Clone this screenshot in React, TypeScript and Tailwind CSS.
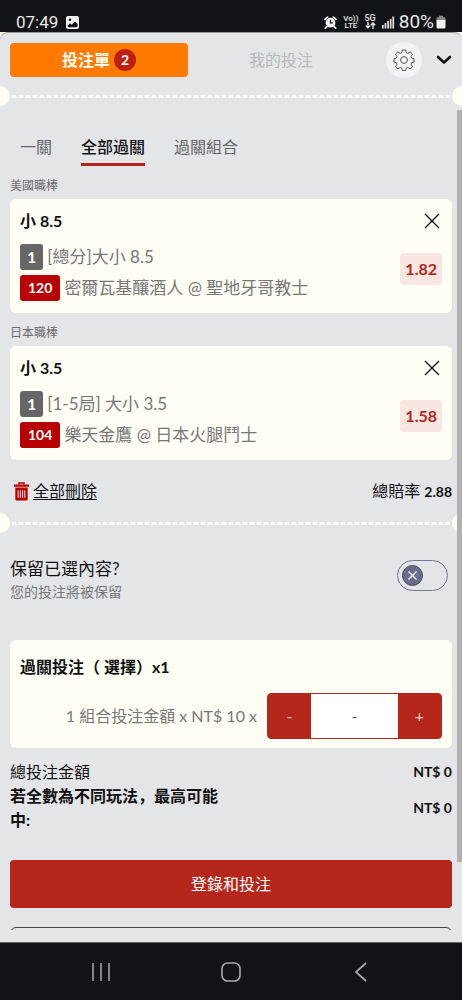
import { useState } from 'react';

interface Bet {
  id: string;
  league: string;
  pick: string;
  line: string;
  period: string;
  market: string;
  code: string;
  match: string;
  odds: string;
}

const BETS: Bet[] = [
  {
    id: 'mlb',
    league: '美國職棒',
    pick: '小',
    line: '8.5',
    period: '1',
    market: '[總分]大小 8.5',
    code: '120',
    match: '密爾瓦基釀酒人 @ 聖地牙哥教士',
    odds: '1.82',
  },
  {
    id: 'npb',
    league: '日本職棒',
    pick: '小',
    line: '3.5',
    period: '1',
    market: '[1-5局] 大小 3.5',
    code: '104',
    match: '樂天金鷹 @ 日本火腿鬥士',
    odds: '1.58',
  },
];

const TABS = ['一關', '全部過關', '過關組合'];

// =========================
// STATUS BAR
// =========================
function StatusBar() {
  return (
    <div className="flex h-8 shrink-0 items-end justify-between bg-[#121316] pl-4 pr-4 font-['Roboto',sans-serif] text-[#e8e8e8]">
      <div className="flex items-center gap-2">
        <span className="text-[17px] leading-5">07:49</span>
        <svg width="13" height="13" viewBox="0 0 13 13" aria-hidden="true">
          <rect width="13" height="13" rx="2" fill="#f1f1f1" />
          <circle cx="4" cy="3.8" r="1.3" fill="#121316" />
          <path d="M1.500 9.800 4 7.200l1.700 1.500L9 5.400l2.600 2.600v1.800a1.400 1.400 0 0 1-1.400 1.400H2.900a1.400 1.400 0 0 1-1.400-1.400z" fill="#121316" />
        </svg>
      </div>

      <div className="flex items-center">
        <svg width="13" height="13" viewBox="0 0 13 13" aria-hidden="true">
          <circle cx="6.5" cy="6.7" r="4.9" fill="#f1f1f1" />
          <path d="M1 3.400 3.600 1.100M12 3.400 9.400 1.100M2.800 10.600 1.400 12.200M10.200 10.600l1.400 1.600" stroke="#f1f1f1" strokeWidth="1.800" strokeLinecap="round" />
          <path d="M6.500 3.700v3.200h2.400" fill="none" stroke="#121316" strokeWidth="1.200" />
        </svg>
        <span className="ml-1.5 flex flex-col items-center text-[8px] font-medium leading-[7px]">
          <span>Vo))</span>
          <span>LTE</span>
        </span>
        <span className="ml-1.5 flex flex-col items-center text-[9px] font-medium leading-[7px]">
          <span>5G</span>
          <svg width="11" height="7" viewBox="0 0 11 7" fill="none" stroke="#f1f1f1" strokeWidth="1.300" aria-hidden="true">
            <path d="M3 0v5.600M.8 3.600 3 5.900l2.200-2.300M8 7V1.200M5.800 3.300 8 1l2.200 2.300" />
          </svg>
        </span>
        <svg className="ml-1.5" width="13" height="13" viewBox="0 0 13 13" fill="#e0e0e0" aria-hidden="true">
          <rect x="0" y="9" width="1.7" height="3.5" />
          <rect x="2.6" y="7" width="1.7" height="5.5" />
          <rect x="5.2" y="5" width="1.7" height="7.5" />
          <rect x="7.8" y="2.8" width="1.7" height="9.7" />
          <rect x="10.4" y=".5" width="1.7" height="12" />
        </svg>
        <span className="ml-1 text-[19px] leading-5">80%</span>
        <svg className="ml-0.5" width="10" height="14" viewBox="0 0 10 14" aria-hidden="true">
          <path d="M3 .8h4v1.400h1.200A1.300 1.300 0 0 1 9.500 3.500v1.200H.5V3.500A1.300 1.300 0 0 1 1.800 2.200H3z" fill="#85868a" />
          <path d="M.5 4.700h9v7.500a1.300 1.300 0 0 1-1.300 1.300H1.800A1.300 1.300 0 0 1 .5 12.200z" fill="#f1f1f1" />
        </svg>
      </div>
    </div>
  );
}

// =========================
// TICKET PERFORATION
// =========================
function Perforation() {
  return (
    <div className="flex h-5 items-center gap-0.5 overflow-hidden">
      <span className="-ml-2.5 size-5 rounded-full bg-[#fffef5]" />
      <span className="h-[3px] flex-1 bg-[repeating-linear-gradient(90deg,#fcfcfc_0_4px,transparent_5px_6px,#fcfcfc_7px)]" />
      <span className="-mr-2.5 size-5 rounded-full bg-[#fffef5]" />
    </div>
  );
}

function GearIcon() {
  // eight rounded teeth around the hub
  return (
    <svg width="22" height="22" viewBox="0 0 22 22" fill="none" stroke="#555" strokeWidth="1" strokeLinejoin="round" aria-hidden="true">
      <circle cx="11" cy="11" r="3.4" />
      <path d="M9.300 1h3.400l.5 2.700 1.700.7 2.300-1.600 2.400 2.400-1.600 2.300.7 1.700 2.300.5v3.400l-2.300.5-.7 1.700 1.600 2.300-2.400 2.400-2.300-1.600-1.700.7-.5 2.300H9.300l-.5-2.300-1.700-.7L4.800 20l-2.400-2.400L4 15.300l-.7-1.700-2.300-.5V9.700l2.300-.5L4 7.500 2.400 5.200l2.400-2.400 2.300 1.600 1.700-.7z" />
    </svg>
  );
}

function BetCard({ bet, onRemove }: { bet: Bet; onRemove: () => void }) {
  return (
    <section>
      <h2 className="mb-1 mt-[11px] text-xs leading-[18px] text-[#6b6b6b]">{bet.league}</h2>
      <div className="flex justify-between rounded-md bg-[#fffef5] px-2.5 pb-3 pt-2.5">
        <div>
          <h3 className="text-base font-bold leading-6">
            {bet.pick} {bet.line}
          </h3>
          <div className="mt-2.5 space-y-1">
            <div className="flex h-[27px] items-center gap-1">
              <span className="rounded-[3px] bg-[#666] px-[7px] text-base font-bold leading-[26px] text-white">{bet.period}</span>
              <span className="text-[17px] leading-6 text-[#777]">{bet.market}</span>
            </div>
            <div className="flex h-[27px] items-center gap-1">
              <span className="rounded-[3px] bg-[#b80000] px-2 text-sm font-bold leading-[26px] text-white">{bet.code}</span>
              <span className="text-[17px] leading-6 text-[#777]">{bet.match}</span>
            </div>
          </div>
        </div>
        <div className="flex shrink-0 flex-col items-end">
          <button aria-label="移除" onClick={onRemove} className="flex h-6 items-center px-0.5">
            <svg width="16" height="16" viewBox="0 0 16 16" stroke="#111" strokeWidth="1.400" aria-hidden="true">
              <path d="m1 1 14 14M15 1 1 15" />
            </svg>
          </button>
          <span className="mt-5 rounded bg-[#f9e6e0] px-[5px] text-base font-bold leading-8 text-[#b0281e]">{bet.odds}</span>
        </div>
      </div>
    </section>
  );
}

export default function App() {
  const [bets, setBets] = useState(BETS);
  const [tab, setTab] = useState('全部過關');
  const [keep, setKeep] = useState(false);
  const [stake, setStake] = useState('-');

  const changeStake = (delta: number) => {
    const next = (parseInt(stake, 10) || 0) + delta;
    setStake(next > 0 ? String(next) : '-');
  };

  return (
    <div className="flex h-screen flex-col bg-[#fffef5] font-['Lato','Noto_Sans_CJK_SC',sans-serif] text-[#111]">
      <StatusBar />

      <main className="relative flex min-h-0 flex-1 flex-col rounded-t-lg border-t border-[#9a9a9a] bg-[#e4e5e7] pb-3">
        {/* HEADER */}
        <header className="flex h-[53px] shrink-0 items-center px-2.5">
          <button className="flex h-[34px] flex-1 items-center justify-center gap-1 rounded bg-[#ff7a00] text-base font-bold text-[#fffef5]">
            投注單
            <span className="flex size-[22px] items-center justify-center rounded-full bg-[#bd1f12] text-sm">2</span>
          </button>
          <button className="ml-1 flex-1 text-base text-[#b8b9bb]">我的投注</button>
          <button aria-label="設定" className="ml-4 flex size-9 items-center justify-center rounded-full bg-[#f3f3f4]">
            <GearIcon />
          </button>
          <button aria-label="收合" className="pl-3.5">
            <svg width="16" height="10" viewBox="0 0 16 10" fill="none" stroke="#111" strokeWidth="2.600" strokeLinecap="round" strokeLinejoin="round" aria-hidden="true">
              <path d="m2 2 6 5.500L14 2" />
            </svg>
          </button>
        </header>

        <div className="min-h-0 flex-1 overflow-hidden">
          <Perforation />

          <div className="px-2.5">
            {/* TABS */}
            <nav className="mt-[29px] flex gap-[29px] px-2.5">
              {TABS.map((name) => (
                <button
                  key={name}
                  onClick={() => setTab(name)}
                  className={
                    name === tab
                      ? 'border-b-[3px] border-[#b5231b] pb-1 text-base leading-6 font-medium text-[#111]'
                      : 'border-b-[3px] border-transparent pb-1 text-base leading-6 text-[#666]'
                  }
                >
                  {name}
                </button>
              ))}
            </nav>

            {bets.map((bet) => (
              <BetCard key={bet.id} bet={bet} onRemove={() => setBets((prev) => prev.filter((b) => b.id !== bet.id))} />
            ))}

            <div className="mb-2.5 mt-[19px] flex h-6 items-center justify-between text-base">
              <button onClick={() => setBets([])} className="flex items-center gap-1 pl-1">
                <svg width="15" height="19" viewBox="0 0 15 19" aria-hidden="true">
                  <path d="M5 2.500V1h5v1.500" fill="none" stroke="#b80000" strokeWidth="1.500" />
                  <path d="M0 2.500h15v2.200H0zM1.300 5.600h12.400V17a1.600 1.600 0 0 1-1.600 1.600H2.900A1.600 1.600 0 0 1 1.300 17z" fill="#b80000" />
                  <path d="M4.200 8.300v7.500M6.400 8.300v7.500M8.600 8.300v7.500M10.800 8.300v7.500" stroke="#e4e5e7" strokeWidth="1" />
                </svg>
                <span className="underline underline-offset-2">全部刪除</span>
              </button>
              <p>
                總賠率 <strong className="text-sm">2.88</strong>
              </p>
            </div>
          </div>

          <Perforation />

          <div className="px-2.5">
            {/* KEEP SELECTION */}
            <label className="mt-6 flex items-start justify-between pr-1">
              <span>
                <span className="block text-[17px] leading-6">保留已選內容?</span>
                <span className="block text-sm leading-[21px] text-[#777]">您的投注將被保留</span>
              </span>
              <span className="mt-[3px] flex h-[31px] w-[51px] items-center rounded-full border border-[#77778a] px-1">
                <input type="checkbox" checked={keep} onChange={(e) => setKeep(e.target.checked)} className="peer sr-only" />
                <svg className="peer-checked:ml-auto" width="21" height="21" viewBox="0 0 21 21" aria-hidden="true">
                  <circle cx="10.500" cy="10.500" r="10" fill="#6b6b8c" stroke="#4a4a60" />
                  <path d="m6.500 6.500 8 8M14.500 6.500l-8 8" stroke="#fff" strokeWidth="1.300" />
                </svg>
              </span>
            </label>

            {/* STAKE */}
            <section className="mt-[38px] rounded-md bg-[#fffef5] px-2.5 pb-[9px] pt-[15px]">
              <h2 className="text-base font-bold leading-6">過關投注（ 選擇）x1</h2>
              <div className="mt-3.5 flex items-center justify-end gap-2.5">
                <label htmlFor="stake" className="text-base text-[#777]">
                  1 組合投注金額 x NT$ 10 x
                </label>
                <div className="flex h-[46px] w-[175px] overflow-hidden rounded border border-[#b5261b] bg-[#b5261b]">
                  <button onClick={() => changeStake(-1)} className="w-[43px] text-base text-[#f3c9c4]">-</button>
                  <input
                    id="stake"
                    value={stake}
                    onChange={(e) => setStake(e.target.value)}
                    className="min-w-0 flex-1 bg-white text-center text-base text-[#555]"
                  />
                  <button onClick={() => changeStake(1)} className="w-[43px] text-base text-[#f3c9c4]">+</button>
                </div>
              </div>
            </section>

            {/* TOTALS */}
            <dl className="mt-3 text-base leading-6">
              <div className="flex items-center justify-between">
                <dt>總投注金額</dt>
                <dd className="text-sm font-bold leading-6">NT$ 0</dd>
              </div>
              <div className="flex items-center justify-between">
                <dt className="w-1/2 font-bold">若全數為不同玩法，最高可能中:</dt>
                <dd className="text-sm font-bold leading-6">NT$ 0</dd>
              </div>
            </dl>

            <button className="mt-7 h-12 w-full rounded bg-[#b5261b] text-base text-white">登錄和投注</button>
            <button aria-label="關閉" className="mt-[19px] h-12 w-full rounded-md border border-[#444]" />
          </div>
        </div>

        {/* scroll thumb */}
        <div className="absolute bottom-20 right-0 top-[77px] w-[5px] bg-[#b0b1b3]" />
      </main>

      {/* SYSTEM NAVIGATION */}
      <nav className="flex h-[58px] shrink-0 items-center justify-around border-t border-[#666] bg-[#121316] px-9">
        <button aria-label="最近使用">
          <svg width="20" height="20" viewBox="0 0 20 20" stroke="#aaa" strokeWidth="1.500" aria-hidden="true">
            <path d="M2 1v18M10 1v18M18 1v18" />
          </svg>
        </button>
        <button aria-label="主畫面">
          <svg width="20" height="20" viewBox="0 0 20 20" fill="none" stroke="#aaa" strokeWidth="1.600" aria-hidden="true">
            <rect x="1" y="1" width="18" height="18" rx="5.500" />
          </svg>
        </button>
        <button aria-label="返回">
          <svg width="20" height="20" viewBox="0 0 20 20" fill="none" stroke="#aaa" strokeWidth="1.700" aria-hidden="true">
            <path d="M15 1 5 10l10 9" />
          </svg>
        </button>
      </nav>
    </div>
  );
}
